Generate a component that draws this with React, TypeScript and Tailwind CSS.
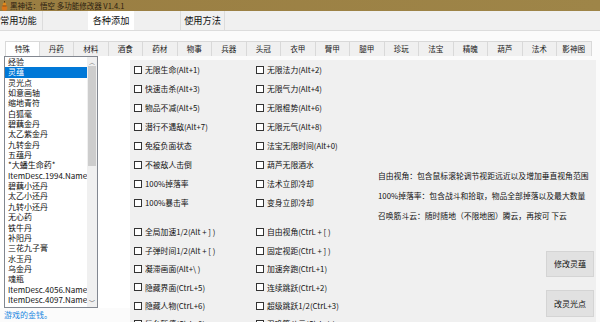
import React from "react";

const innerTabs = ["特殊", "丹药", "材料", "酒食", "药材", "物事", "兵器", "头冠", "衣甲", "臂甲", "腿甲", "珍玩", "法宝", "精魄", "葫芦", "法术", "影神图"];

const items = [
    "经验", "灵蕴", "灵光点", "如意画轴", "缩地青符", "白狐毫", "碧藕金丹", "太乙紫金丹", "九转金丹", "五蕴丹",
    "*大蟠生命药*", "ItemDesc.1994.Name", "碧藕小还丹", "太乙小还丹", "九转小还丹", "无心药", "铁牛丹", "补阳丹",
    "三花九子膏", "水玉丹", "乌金丹", "魂瓶", "ItemDesc.4056.Name", "ItemDesc.4097.Name",
];

const group1: [string, string][] = [
    ["无限生命(Alt+1)", "无限法力(Alt+2)"],
    ["快速击杀(Alt+3)", "无限气力(Alt+4)"],
    ["物品不减(Alt+5)", "无限棍势(Alt+6)"],
    ["潜行不遇敌(Alt+7)", "无限元气(Alt+8)"],
    ["免疫负面状态", "法宝无限时间(Alt+0)"],
    ["不被敌人击倒", "葫芦无限酒水"],
    ["100%掉落率", "法术立即冷却"],
    ["100%暴击率", "变身立即冷却"],
];

const group2: [string, string][] = [
    ["全局加速1/2(Alt + ] )", "自由视角(CtrL + [ )"],
    ["子弹时间1/2(Alt + [ )", "固定视距(CtrL + ] )"],
    ["凝滞画面(Alt+\\ )", "加速奔跑(CtrL+1)"],
    ["隐藏界面(CtrL+5)", "连续跳跃(CtrL+2)"],
    ["隐藏人物(CtrL+6)", "超级跳跃1/2(CtrL+3)"],
    ["后台暂停(CtrL+0)", "召唤筋斗云(CtrL+\\ )"],
];

function Check({label}: {label: string}) {
    return (
        <div className="flex items-center gap-[3px] w-[123px] whitespace-nowrap">
            <span className="w-[8px] h-[8px] border border-[#333] bg-white shrink-0"/>
            <span>{label}</span>
        </div>
    );
}

function Gourd() {
    return (
        <svg width="7" height="10" viewBox="0 0 7 10">
            <rect x="3" y="0" width="1" height="2" fill="#5a3a10"/>
            <circle cx="3.5" cy="3.2" r="1.7" fill="#e08a1e"/>
            <circle cx="3.5" cy="7" r="2.8" fill="#d9761a"/>
            <rect x="1.5" y="4.6" width="4" height="0.8" fill="#8a4a10"/>
        </svg>
    );
}

export default function App() {
    return (
        <div className="w-[600px] h-[322px] overflow-hidden bg-[#f0f0f0] flex flex-col font-['Noto_Sans_CJK_SC',sans-serif] text-[#111]">
            {/* title bar */}
            <div className="h-[11px] shrink-0 bg-gradient-to-r from-[#9a7e42] to-[#9e8548] flex items-center gap-[2px] pl-[1px]">
                <Gourd/>
                <span className="text-[7.5px] leading-none text-[#2b2010]">黑神话：悟空 多功能修改器 V1.4.1</span>
            </div>

            {/* top tabs */}
            <div className="h-[20px] shrink-0 flex items-stretch border-b border-[#dcdcdc] text-[9.2px]">
                <div className="w-[43px] flex items-center border-r border-[#dcdcdc]">常用功能</div>
                <div className="w-[45px]"/>
                <div className="w-[46px] flex items-center justify-center bg-white">各种添加</div>
                <div className="w-[46px]"/>
                <div className="w-[45px] flex items-center justify-center border-x border-[#dcdcdc]">使用方法</div>
            </div>

            {/* outer page */}
            <div className="flex-1 flex flex-col bg-[#fbfbfb] min-h-0">
                <div className="h-[10px] shrink-0"/>
                <div className="flex h-[15px] shrink-0 pl-[5px] text-[7.6px] text-[#222]">
                    {innerTabs.map((t, i) => (
                        <div
                            key={t}
                            className={`w-[34.5px] flex items-center justify-center border-r border-t border-[#d9d9d9] ${i === 0 ? "bg-white border-l" : "bg-[#f0f0f0]"}`}
                        >
                            {t}
                        </div>
                    ))}
                </div>

                {/* inner page */}
                <div className="flex-1 flex min-h-0">
                    <div className="w-[130px] flex flex-col">
                        <div className="h-[252px] shrink-0 bg-white pl-[4px] pr-[32px]">
                            <div className="h-full border border-[#828790] flex">
                                <div className="flex-1 overflow-hidden text-[8px]">
                                    {items.map((it, i) => (
                                        <div
                                            key={it}
                                            className={`h-[10.35px] leading-[10.35px] pl-[3px] whitespace-nowrap ${i === 1 ? "bg-[#0078d7] text-white" : ""}`}
                                        >
                                            {it}
                                        </div>
                                    ))}
                                </div>
                                <div className="w-[10px] bg-[#f0f0f0] flex flex-col items-center text-[6px] text-[#606060]">
                                    <div className="h-[9px] leading-[9px]">︿</div>
                                    <div className="w-[8px] h-[100px] bg-[#cdcdcd]"/>
                                    <div className="flex-1"/>
                                    <div className="h-[9px] leading-[9px]">﹀</div>
                                </div>
                            </div>
                        </div>
                        <div className="pl-[4px] pt-[1px] text-[8px] text-[#1a86e0]">游戏的金钱。</div>
                    </div>

                    {/* gray panel */}
                    <div className="flex-1 mt-[4px] mr-[4px] bg-[#f0f0f0] flex text-[7.8px] min-h-0 overflow-hidden">
                        <div className="w-[248px] pl-[4px] flex flex-col">
                            {group1.map(([a, b]) => (
                                <div key={a} className="h-[19px] shrink-0 flex items-center">
                                    <Check label={a}/>
                                    <Check label={b}/>
                                </div>
                            ))}
                            <div className="h-[11px] shrink-0"/>
                            {group2.map(([a, b]) => (
                                <div key={a} className="h-[18.4px] shrink-0 flex items-center">
                                    <Check label={a}/>
                                    <Check label={b}/>
                                </div>
                            ))}
                        </div>
                        <div className="flex-1 flex flex-col pt-[106px] pr-[2px]">
                            <div className="leading-[20px] whitespace-nowrap">
                                <div>自由视角：包含鼠标滚轮调节视距远近以及增加垂直视角范围</div>
                                <div>100%掉落率：包含战斗和拾取，物品全部掉落以及最大数量</div>
                                <div>召唤筋斗云：随时随地（不限地图）腾云，再按可 下云</div>
                            </div>
                            <button className="self-end shrink-0 mt-[25px] w-[48px] h-[26px] bg-[#e1e1e1] border border-[#d4d4d4] text-[8px]">修改灵蕴</button>
                            <button className="self-end shrink-0 mt-[13px] w-[48px] h-[27px] bg-[#e1e1e1] border border-[#d4d4d4] text-[8px]">改灵光点</button>
                        </div>
                    </div>
                </div>
            </div>
        </div>
    );
}
